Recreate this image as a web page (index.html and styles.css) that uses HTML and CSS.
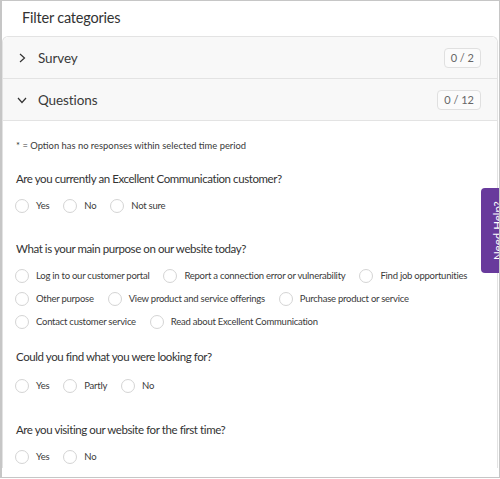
FILE: index.html
```html
<!DOCTYPE html>
<html>
<head>
<meta charset="utf-8">
<link rel="stylesheet" href="styles.css">
</head>
<body>
<div class="frame">
  <h1 class="title">Filter categories</h1>
  <div class="accordion">
    <div class="acc-row">
      <svg class="chev" width="10" height="10" viewBox="0 0 10 10"><path d="M3 1 L7.5 5 L3 9" fill="none" stroke="#333" stroke-width="1.2"/></svg>
      <span class="acc-label">Survey</span>
      <span class="badge">0 / 2</span>
    </div>
    <div class="acc-row">
      <svg class="chev" width="10" height="10" viewBox="0 0 10 10"><path d="M1 3 L5 7.5 L9 3" fill="none" stroke="#333" stroke-width="1.2"/></svg>
      <span class="acc-label">Questions</span>
      <span class="badge">0 / 12</span>
    </div>
    <div class="panel">
      <p class="note">* = Option has no responses within selected time period</p>

      <div class="question q1">
        <p class="q-title">Are you currently an Excellent Communication customer?</p>
        <div class="options">
          <label class="opt"><span class="radio"></span>Yes</label>
          <label class="opt"><span class="radio"></span>No</label>
          <label class="opt"><span class="radio"></span>Not sure</label>
        </div>
      </div>

      <div class="question q2">
        <p class="q-title">What is your main purpose on our website today?</p>
        <div class="options">
          <label class="opt"><span class="radio"></span>Log in to our customer portal</label>
          <label class="opt"><span class="radio"></span>Report a connection error or vulnerability</label>
          <label class="opt"><span class="radio"></span>Find job opportunities</label>
          <label class="opt"><span class="radio"></span>Other purpose</label>
          <label class="opt"><span class="radio"></span>View product and service offerings</label>
          <label class="opt"><span class="radio"></span>Purchase product or service</label>
          <label class="opt"><span class="radio"></span>Contact customer service</label>
          <label class="opt"><span class="radio"></span>Read about Excellent Communication</label>
        </div>
      </div>

      <div class="question q3">
        <p class="q-title">Could you find what you were looking for?</p>
        <div class="options">
          <label class="opt"><span class="radio"></span>Yes</label>
          <label class="opt"><span class="radio"></span>Partly</label>
          <label class="opt"><span class="radio"></span>No</label>
        </div>
      </div>

      <div class="question q4">
        <p class="q-title">Are you visiting our website for the first time?</p>
        <div class="options">
          <label class="opt"><span class="radio"></span>Yes</label>
          <label class="opt"><span class="radio"></span>No</label>
        </div>
      </div>
    </div>
  </div>
  <div class="help-tab">Need Help?</div>
</div>
</body>
</html>
```

FILE: styles.css
```css
* { box-sizing: border-box; }
html, body { margin: 0; padding: 0; background: #fff; }
body { font-family: Lato, "Open Sans", "DejaVu Sans", sans-serif; color: #3a3a3a; }

.frame {
  position: relative;
  width: 500px;
  height: 478px;
  border: 1px solid #c6c6c6;
  border-left-width: 2px;
  overflow: hidden;
}

.title {
  margin: 0;
  padding: 7px 0 0 20px;
  height: 35px;
  font-size: 14.5px;
  font-weight: 400;
  line-height: 20px;
  letter-spacing: -0.2px;
  color: #333;
}

.accordion {
  margin: 0 1px 0 0;
  border: 1px solid #e3e3e3;
  border-bottom: none;
  border-radius: 6px 6px 0 0;
}

.acc-row {
  display: flex;
  align-items: center;
  height: 42px;
  padding: 0 16px 0 14px;
  background: #f8f8f8;
  border-bottom: 1px solid #e3e3e3;
}
.accordion .acc-row:first-child { border-radius: 6px 6px 0 0; }

.chev { flex: none; margin-right: 11px; }

.acc-label {
  flex: 1;
  font-size: 13.5px;
  letter-spacing: -0.1px;
  color: #3a3a3a;
}

.badge {
  font-size: 11px;
  color: #666;
  border: 1px solid #e0e0e0;
  border-radius: 4px;
  padding: 0 6px;
  height: 20px;
  line-height: 18px;
  background: #fbfbfb;
}

.panel {
  padding: 18px 14px 0 12px;
}

.note {
  margin: 0 0 0 1px;
  font-size: 9.4px;
  line-height: 14px;
  color: #3a3a3a;
}

.question { margin-top: 18px; }
.q2 { margin-top: 24px; }
.q3 { margin-top: 16px; }
.q4 { margin-top: 25px; }

.q-title {
  margin: 0 0 7px 1px;
  font-size: 11.5px;
  line-height: 16px;
  letter-spacing: -0.42px;
  color: #333;
}
.q3 .q-title { margin-bottom: 9px; }

.options {
  display: flex;
  flex-wrap: wrap;
  column-gap: 14px;
}

.opt {
  display: flex;
  align-items: center;
  height: 23px;
  font-size: 9.5px;
  letter-spacing: -0.25px;
  color: #3a3a3a;
}

.radio {
  width: 14px;
  height: 14px;
  border: 1px solid #d4d4d4;
  border-radius: 50%;
  margin-right: 7px;
  background: #fff;
}

.q2 .options { width: 470px; }

.help-tab {
  position: absolute;
  top: 187px;
  right: -14px;
  width: 32px;
  height: 85px;
  background: #683a9c;
  border-radius: 4px;
  color: #fff;
  font-size: 11.5px;
  writing-mode: vertical-rl;
  transform: rotate(180deg);
  display: flex;
  align-items: center;
  justify-content: center;
}
```
